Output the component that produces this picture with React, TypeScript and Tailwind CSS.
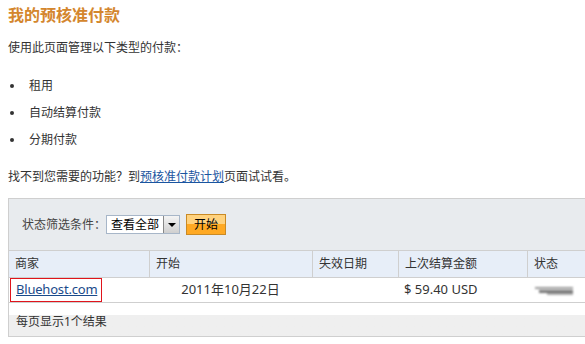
const font = { fontFamily: '"Noto Sans", "Noto Sans CJK SC", sans-serif' }

const cols = [
  { label: "商家", w: "w-[140px]" },
  { label: "开始", w: "w-[163px]" },
  { label: "失效日期", w: "w-[86px]" },
  { label: "上次结算金额", w: "w-[129px]" },
  { label: "状态", w: "flex-1" }
]

export default function App() {
  return (
    <div className="w-[585px] h-[344px] overflow-hidden bg-white text-[12px] text-[#333]" style={font}>
      <div className="pl-2">
        <h1 className="pt-[3px] leading-[24px] text-[16px] font-bold text-[#d4862d]">我的预核准付款</h1>
        <p className="mt-[11px] leading-[20px]">使用此页面管理以下类型的付款：</p>
        <ul className="mt-[14px]">
          {["租用", "自动结算付款", "分期付款"].map((t) => (
            <li key={t} className="flex items-center h-[27px] leading-[27px]">
              <span className="w-[4px] h-[4px] rounded-full bg-[#333] ml-[2px] mr-[15px]" />
              {t}
            </li>
          ))}
        </ul>
        <p className="mt-[14px] leading-[20px]">
          找不到您需要的功能？到<a className="text-[#1a55a0] underline">预核准付款计划</a>页面试试看。
        </p>

        <div className="mt-[11px] border-l border-t border-[#cfcfcf] w-[600px]">
          <div className="h-[51px] bg-[#e8ebee] flex items-center pl-[13px]">
            <span className="text-[#444]">状态筛选条件：</span>
            <div className="flex items-center h-[19px] border border-[#a7b6c8] bg-white">
              <span className="px-[4px] text-[12px] text-black leading-[17px]">查看全部</span>
              <span className="w-[16px] h-[17px] border-l border-[#888] bg-gradient-to-b from-[#f4f4f4] to-[#cfcfcf] flex items-center justify-center">
                <span className="w-0 h-0 border-l-[4px] border-r-[4px] border-t-[4px] border-l-transparent border-r-transparent border-t-black" />
              </span>
            </div>
            <button className="ml-[6px] h-[21px] w-[40px] border border-[#c98a25] bg-gradient-to-b from-[#ffd27e] from-50% to-[#ffa923] to-50% text-black text-[12px] leading-[19px]">
              开始
            </button>
          </div>

          <div className="flex h-[28px] bg-[#e7eef8] border-t border-b border-[#cfcfcf]">
            {cols.map((c, i) => (
              <div key={c.label} className={`${c.w} flex items-center pl-[6px] ${i > 0 ? "border-l border-[#cfcfcf]" : ""}`}>
                {c.label}
              </div>
            ))}
          </div>

          <div className="flex h-[25px] items-center border-b border-[#cfcfcf] text-[13px]">
            <div className="w-[140px] h-full pl-px">
              <div className="w-[92px] h-[24px] border border-[#e0141c] flex items-center pl-[5px]">
                <a className="text-[#1a4a8a] underline tracking-[-0.2px]">Bluehost.com</a>
              </div>
            </div>
            <div className="w-[163px] text-center">2011年10月22日</div>
            <div className="w-[86px]" />
            <div className="w-[129px] pl-[6px]">$ 59.40 USD</div>
            <div className="flex-1 pl-[6px]">
              <div className="relative w-[42px] h-[10px] blur-[1.2px]">
                <div className="absolute left-[2px] top-[2px] w-[38px] h-[2px] bg-[#999]" />
                <div className="absolute left-[6px] top-[5px] w-[34px] h-[3px] bg-[#777]" />
                <div className="absolute left-[14px] top-[8px] w-[26px] h-[2px] bg-[#aaa]" />
              </div>
            </div>
          </div>

          <div className="h-[34px] border-b border-[#cfcfcf] bg-gradient-to-b from-white from-35% to-[#efefef] to-35% flex items-center pl-[7px] pt-[4px]">
            每页显示1个结果
          </div>
        </div>
      </div>
    </div>
  )
}
